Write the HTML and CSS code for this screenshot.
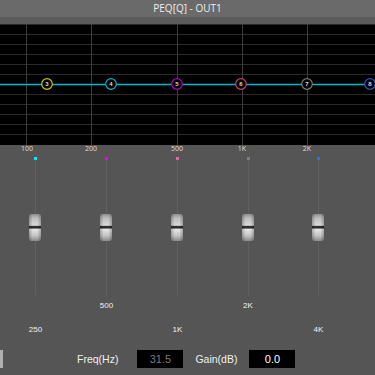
FILE: index.html
```html
<!DOCTYPE html>
<html lang="en">
<head>
  <meta charset="UTF-8" />
  <title>PEQ[Q] - OUT1</title>
  <link rel="stylesheet" href="styles.css">
</head>
<body>

  <div class="title">PEQ[Q] - OUT1</div>
  <div class="title-strip"></div>

  <!-- Response graph -->
  <svg class="graph" width="375" height="131" viewBox="0 0 375 131">
    <rect x="0" y="0" width="375" height="121" fill="#000"/>
    <g stroke="#2b2b2b" stroke-width="1">
      <line x1="0" y1="0.5" x2="375" y2="0.5"/>
      <line x1="0" y1="10.5" x2="375" y2="10.5"/>
      <line x1="0" y1="20.5" x2="375" y2="20.5"/>
      <line x1="0" y1="30.5" x2="375" y2="30.5"/>
      <line x1="0" y1="40.5" x2="375" y2="40.5"/>
      <line x1="0" y1="50.5" x2="375" y2="50.5"/>
      <line x1="0" y1="70.5" x2="375" y2="70.5"/>
      <line x1="0" y1="80.5" x2="375" y2="80.5"/>
      <line x1="0" y1="90.5" x2="375" y2="90.5"/>
      <line x1="0" y1="100.5" x2="375" y2="100.5"/>
      <line x1="0" y1="110.5" x2="375" y2="110.5"/>
    </g>
    <g stroke="#3c3c3c" stroke-width="1">
      <line x1="26.5" y1="0" x2="26.5" y2="121"/>
      <line x1="91.5" y1="0" x2="91.5" y2="121"/>
      <line x1="177.5" y1="0" x2="177.5" y2="121"/>
      <line x1="242.5" y1="0" x2="242.5" y2="121"/>
      <line x1="307.5" y1="0" x2="307.5" y2="121"/>
    </g>
    <line x1="0" y1="60.5" x2="375" y2="60.5" stroke="#00b8c8" stroke-width="1.3"/>

    <g fill="#000" stroke-width="1.2" class="nodes">
      <circle cx="47" cy="60" r="5.3" stroke="#c8c800"/>
      <circle cx="111" cy="60" r="5.3" stroke="#00b0c0"/>
      <circle cx="177" cy="60" r="5.3" stroke="#b000b8"/>
      <circle cx="241" cy="60" r="5.3" stroke="#c0407a"/>
      <circle cx="307" cy="60" r="5.3" stroke="#7a7a7a"/>
      <circle cx="370" cy="60" r="5.3" stroke="#3050c0"/>
    </g>
    <g class="node-num" fill="#ddd" text-anchor="middle">
      <text x="47" y="62">3</text>
      <text x="111" y="62">4</text>
      <text x="177" y="62">5</text>
      <text x="241" y="62">6</text>
      <text x="307" y="62">7</text>
      <text x="370" y="62">8</text>
    </g>

    <g class="axis" fill="#ddd" text-anchor="middle">
      <text x="27" y="127">100</text>
      <text x="91" y="127">200</text>
      <text x="177" y="127">500</text>
      <text x="242" y="127">1K</text>
      <text x="307" y="127">2K</text>
    </g>
  </svg>

  <!-- Band faders -->
  <div class="faders">
    <div class="fader">
      <div class="dot dot-cyan"></div>
      <div class="track"><div class="thumb"></div></div>
    </div>
    <div class="fader">
      <div class="dot dot-magenta"></div>
      <div class="track"><div class="thumb"></div></div>
    </div>
    <div class="fader">
      <div class="dot dot-pink"></div>
      <div class="track"><div class="thumb"></div></div>
    </div>
    <div class="fader">
      <div class="dot dot-gray"></div>
      <div class="track"><div class="thumb"></div></div>
    </div>
    <div class="fader">
      <div class="dot dot-blue"></div>
      <div class="track"><div class="thumb"></div></div>
    </div>
  </div>

  <div class="freq-row">
    <span></span><span>500</span><span></span><span>2K</span><span></span>
  </div>
  <div class="freq-row">
    <span>250</span><span></span><span>1K</span><span></span><span>4K</span>
  </div>

  <div class="params">
    <div class="edge-tab"></div>
    <span class="param-label">Freq(Hz)</span>
    <div class="value-box dim">31.5</div>
    <span class="param-label">Gain(dB)</span>
    <div class="value-box">0.0</div>
  </div>

</body>
</html>
```

FILE: styles.css
```css
body {
    margin: 0;
    width: 375px;
    height: 375px;
    background-color: #555555;
    color: #eeeeee;
    font-family: 'Liberation Sans', Arial, sans-serif;
    overflow: hidden;
}

/* Window title */
.title {
    height: 17px;
    line-height: 17px;
    background-color: #6a6a6a;
    text-align: center;
    font-family: 'Open Sans', sans-serif;
    font-size: 10px;
    color: #eeeeee;
}

.title-strip {
    height: 7px;
    background-color: #5b5b5b;
}

.graph {
    display: block;
}

.node-num text {
    font-family: 'Liberation Sans', sans-serif;
    font-size: 6px;
    font-weight: bold;
}

.axis text {
    font-family: 'Open Sans', sans-serif;
    font-size: 7px;
}

/* Faders */
.faders {
    display: grid;
    grid-template-columns: 71px 71px 71px 70px 71px;
    height: 143px;
}

.fader {
    display: flex;
    flex-direction: column;
    align-items: center;
}

.dot {
    width: 3px;
    height: 3px;
    margin-top: 2px;
}

.dot-cyan { background-color: #00e8f0; }
.dot-magenta { background-color: #f000f0; }
.dot-pink { background-color: #f0609a; }
.dot-gray { background-color: #73808e; }
.dot-blue { background-color: #3a66f0; }

.track {
    position: relative;
    width: 1px;
    height: 135px;
    background-color: #606060;
}

.thumb {
    position: absolute;
    top: 54px;
    left: -6px;
    width: 12px;
    height: 27px;
    border-radius: 2px;
    background:
        linear-gradient(to right, rgba(0,0,0,0.25), rgba(0,0,0,0) 30%, rgba(0,0,0,0) 70%, rgba(0,0,0,0.25)),
        linear-gradient(to bottom, #8e8e8e 0%, #bcbcbc 15%, #d8d8d8 42%, #2e2e2e 46%, #2e2e2e 52%, #e6e6e6 56%, #c4c4c4 80%, #8a8a8a 100%);
}

/* Frequency labels under faders */
.freq-row {
    display: grid;
    grid-template-columns: 71px 71px 71px 70px 71px;
    height: 24px;
    line-height: 16px;
    font-size: 8px;
    text-align: center;
    color: #f2f2f2;
}

/* Freq / gain inputs */
.params {
    display: flex;
    align-items: center;
    height: 18px;
    margin-top: 4px;
    font-size: 10.5px;
}

.edge-tab {
    width: 3px;
    height: 18px;
    background-color: #b0b0b0;
    margin-right: 74px;
}

.param-label {
    color: #f0f0f0;
}

.value-box {
    width: 46px;
    height: 18px;
    line-height: 18px;
    background-color: #000;
    text-align: center;
    color: #ffffff;
    font-size: 11px;
    margin-left: 19px;
    margin-right: 12px;
}

.value-box + .param-label + .value-box {
    margin-left: 12px;
}

.value-box.dim {
    color: #7a7a7a;
}
```
